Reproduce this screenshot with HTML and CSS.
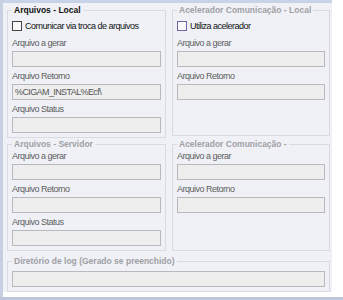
FILE: index.html
```html
<!DOCTYPE html>
<html lang="pt-BR">
<head>
    <meta charset="UTF-8">
    <title>Comunicação</title>
    <link rel="stylesheet" href="styles.css">
</head>
<body>
    <div class="window">
        <div class="frame">
            <fieldset class="group">
                <legend class="active">Arquivos - Local</legend>
                <label class="check"><span class="box"></span>Comunicar via troca de arquivos</label>
                <div class="label">Arquivo a gerar</div>
                <div class="field"></div>
                <div class="label">Arquivo Retorno</div>
                <div class="field">%CIGAM_INSTAL%Ecf\</div>
                <div class="label">Arquivo Status</div>
                <div class="field"></div>
            </fieldset>

            <fieldset class="group short">
                <legend>Acelerador Comunicação - Local</legend>
                <label class="check"><span class="box focus"></span>Utiliza acelerador</label>
                <div class="label">Arquivo a gerar</div>
                <div class="field"></div>
                <div class="label">Arquivo Retorno</div>
                <div class="field"></div>
            </fieldset>

            <fieldset class="group">
                <legend>Arquivos - Servidor</legend>
                <div class="label first">Arquivo a gerar</div>
                <div class="field"></div>
                <div class="label">Arquivo Retorno</div>
                <div class="field"></div>
                <div class="label">Arquivo Status</div>
                <div class="field"></div>
            </fieldset>

            <fieldset class="group">
                <legend>Acelerador Comunicação -</legend>
                <div class="label first">Arquivo a gerar</div>
                <div class="field"></div>
                <div class="label">Arquivo Retorno</div>
                <div class="field"></div>
            </fieldset>

            <fieldset class="group wide">
                <legend>Diretório de log (Gerado se preenchido)</legend>
                <div class="field log"></div>
            </fieldset>
        </div>
    </div>
    <div class="statusbar"></div>
</body>
</html>
```

FILE: styles.css
```css
body { margin: 0; background: #fff; font-family: "Liberation Sans", Arial, sans-serif; font-size: 9px; color: #222; }
.window { height: 297px; border-left: 3px solid #c7d0e2; box-sizing: border-box; }
.frame { width: 329px; height: 292px; box-sizing: border-box; border-top: 3px solid #c9d3e7; background: #eff1f7; padding: 1px 2px 0 4px; overflow: hidden; display: grid; grid-template-columns: 159px 158px; grid-auto-rows: min-content; column-gap: 6px; }
.group { margin: 0; padding: 0 4px 4px 4px; border: 1px solid #d8dbe3; min-width: 0; }
.group legend { padding: 0 2px; line-height: 12px; font-size: 8.5px; font-weight: bold; color: #a0a0a4; }
.group legend.active { color: #111; }
.short { margin-bottom: 2px; }
.wide { grid-column: 1 / -1; margin-top: 4px; }
.check { display: flex; align-items: center; height: 12px; margin-top: 4px; letter-spacing: -0.5px; color: #111; }
.box { width: 8px; height: 8px; border: 1px solid #444; background: #fafafa; margin-right: 3px; }
.box.focus { border-color: #6f66a8; }
.label { height: 12px; line-height: 12px; margin-top: 3px; letter-spacing: -0.5px; color: #5e5e5e; }
.check + .label { margin-top: 5px; }
.label.first { margin-top: 0; }
.field { height: 16px; margin-top: 2px; box-sizing: border-box; border: 1px solid #b9b9bd; background: #eeeeee; padding-left: 2px; line-height: 14px; letter-spacing: -0.6px; color: #555; }
.field.log { margin-top: 4px; }
.statusbar { height: 3px; background: #bcc6dc; }
```
